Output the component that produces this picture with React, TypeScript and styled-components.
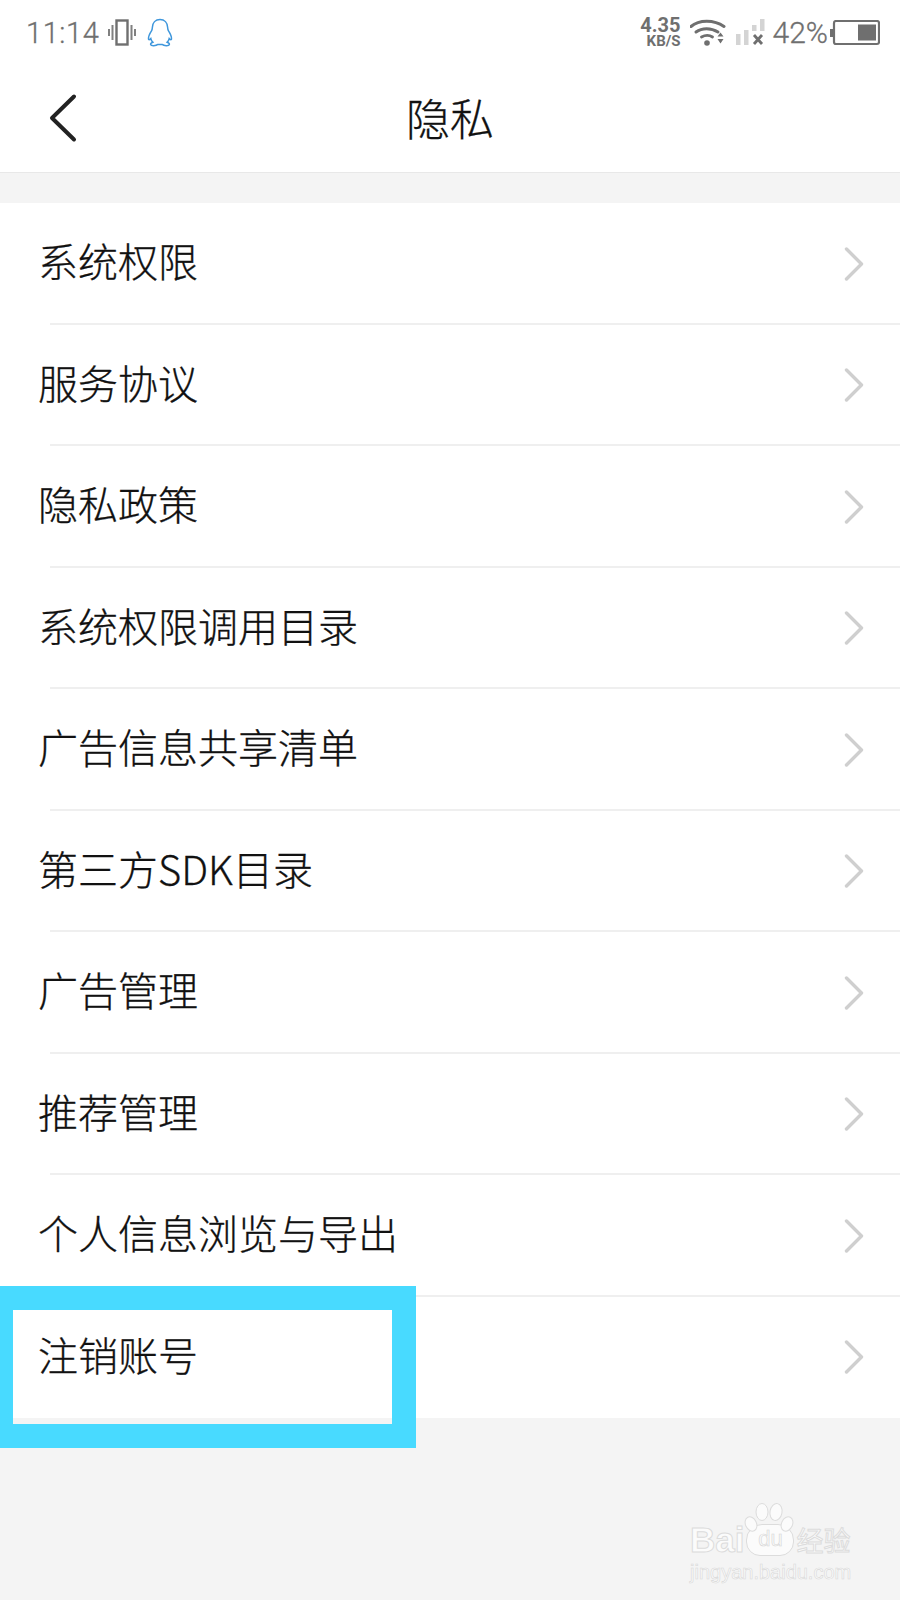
import React from 'react';
import styled, { createGlobalStyle } from 'styled-components';

const GlobalStyle = createGlobalStyle`
  html, body {
    margin: 0;
    padding: 0;
    background: #f4f4f4;
  }
  body {
    font-family: 'Noto Sans CJK SC', Roboto, sans-serif;
  }
`;

const Page = styled.div`
  position: relative;
  width: 900px;
  height: 1600px;
  overflow: hidden;
  background: #f4f4f4;
`;

const StatusBar = styled.div`
  height: 68px;
  box-sizing: border-box;
  padding: 0 20px 3px 26px;
  display: flex;
  align-items: center;
  justify-content: space-between;
  background: #fff;
  color: #6f6f6f;
  font-family: Roboto, sans-serif;
`;

const StatusGroup = styled.div`
  display: flex;
  align-items: center;
`;

const Clock = styled.span`
  font-size: 29px;
  font-weight: 300;
  letter-spacing: 0.6px;
  margin-right: 9px;
  -webkit-text-stroke: 0.3px #6f6f6f;
`;

const Speed = styled.div`
  display: flex;
  flex-direction: column;
  align-items: flex-end;
  font-weight: 700;
  margin-right: 9px;
  span:first-child {
    font-size: 20px;
    line-height: 18px;
  }
  span:last-child {
    font-size: 15px;
    line-height: 15px;
  }
`;

const Percent = styled.span`
  font-size: 30px;
  font-weight: 300;
  margin: 0 2px 0 7px;
  -webkit-text-stroke: 0.3px #6f6f6f;
`;

const Header = styled.header`
  height: 104px;
  display: flex;
  align-items: center;
  justify-content: center;
  position: relative;
  background: #fff;
  border-bottom: 1px solid #e8e8e8;
`;

const BackButton = styled.svg`
  position: absolute;
  left: 48px;
  top: 25px;
`;

const Title = styled.h1`
  margin: 0 0 6px;
  font-size: 44px;
  font-weight: 300;
  color: #111;
  -webkit-text-stroke: 0.3px #111;
`;

const List = styled.ul`
  margin: 30px 0 0;
  padding: 0;
  list-style: none;
  background: #fff;
`;

const Row = styled.li`
  height: 121.5px;
  box-sizing: border-box;
  padding: 0 36px 0 38px;
  display: flex;
  align-items: center;
  justify-content: space-between;
  position: relative;
  font-size: 40px;
  font-weight: 300;
  color: #111;
  &:not(:last-child)::after {
    content: '';
    position: absolute;
    left: 50px;
    right: 0;
    bottom: 0;
    height: 2px;
    background: #efefef;
  }
`;

const RowLabel = styled.span`
  margin-bottom: 7px;
  -webkit-text-stroke: 0.3px #111;
`;

const Highlight = styled.div`
  position: absolute;
  left: -11px;
  top: 1286px;
  width: 379px;
  height: 114px;
  border: 24px solid #48daff;
`;

const Watermark = styled.div`
  position: absolute;
  left: 690px;
  top: 1524px;
  width: 165px;
  color: #fbfbfb;
  font-family: 'Liberation Sans', sans-serif;
`;

const WatermarkBrand = styled.div`
  display: flex;
  align-items: center;
  height: 32px;
  font-size: 35px;
  font-weight: 700;
  line-height: 32px;
  -webkit-text-stroke: 1px #dcdcdc;
`;

const WatermarkDu = styled.span`
  width: 46px;
  height: 30px;
  margin-left: 2px;
  border: 1px solid #dcdcdc;
  border-radius: 16px 16px 14px 14px;
  background: #fbfbfb;
  text-align: center;
  font-size: 22px;
  line-height: 27px;
  font-weight: 400;
  -webkit-text-stroke: 0.6px #d4d4d4;
`;

const WatermarkCjk = styled.span`
  font-size: 27px;
  font-weight: 400;
  line-height: 30px;
  margin-left: 2px;
  font-family: 'Noto Sans CJK SC', sans-serif;
`;

const WatermarkUrl = styled.div`
  font-size: 20px;
  line-height: 24px;
  margin-top: 4px;
  white-space: nowrap;
  -webkit-text-stroke: 0.6px #d8d8d8;
`;

const Paw = styled.svg`
  position: absolute;
  left: 54px;
  top: -22px;
`;

const VibrateIcon = () => (
  <svg width="28" height="28" viewBox="0 0 28 28" fill="none" stroke="#6f6f6f" style={{ marginRight: 11 }}>
    <rect x="8.5" y="1.5" width="11" height="24" strokeWidth="2.4" />
    <path d="M4.5 6v15M1 10v7M23.5 6v15M27 10v7" strokeWidth="2" stroke="#808080" />
  </svg>
);

const PenguinIcon = () => (
  <svg width="26" height="30" viewBox="0 0 26 30" fill="none" stroke="#3f97dc" strokeWidth="1.5">
    <path d="M13 1.5c-4.6 0-7.4 3.3-7.6 7.7-.1 1.5-.2 2.600-.9 3.700-1.500 2.300-3.200 5.300-3 8 .1 1.200 1 1.100 2.300-.3.300 1.500 1 2.800 2 3.600-1.600.7-2.500 1.600-2.100 2.600.5 1.300 5.200 1.300 7.300-.4h4c2.100 1.700 6.800 1.700 7.300.4.400-1-.5-1.900-2.100-2.600 1-.8 1.700-2.100 2-3.600 1.300 1.400 2.200 1.500 2.300.3.200-2.700-1.500-5.700-3-8-.7-1.100-.8-2.200-.9-3.700-.2-4.400-3-7.700-7.600-7.700z" />
  </svg>
);

const WifiIcon = () => (
  <svg width="36" height="28" viewBox="0 0 36 28" fill="#6f6f6f" style={{ marginRight: 10 }}>
    <path d="M1 7.500C9 .5 24 .5 34 7.500" fill="none" stroke="#6f6f6f" strokeWidth="3" strokeLinecap="round" />
    <path d="M6 13c6-4.500 15-4.500 22 0" fill="none" stroke="#6f6f6f" strokeWidth="3" strokeLinecap="round" />
    <path d="M11.500 18c3.500-2 8-2 11 0" fill="none" stroke="#6f6f6f" strokeWidth="2.800" strokeLinecap="round" />
    <circle cx="17" cy="24" r="2.800" />
    <path d="M27.500 17.500l3-4 3 4zM27.500 20l3 4.500 3-4.500z" />
  </svg>
);

const SignalIcon = () => (
  <svg width="30" height="28" viewBox="0 0 30 28">
    <rect x="0" y="15" width="4.500" height="11" fill="#d4d4d4" />
    <rect x="8" y="11" width="4.500" height="15" fill="#d4d4d4" />
    <rect x="16" y="6" width="4.500" height="6" fill="#d4d4d4" />
    <rect x="24" y="0" width="4.500" height="12" fill="#d4d4d4" />
    <path d="M18 16l8 9M26 16l-8 9" stroke="#6f6f6f" strokeWidth="2.800" />
  </svg>
);

const BatteryIcon = () => (
  <svg width="50" height="26" viewBox="0 0 50 26" fill="none">
    <rect x="0" y="9" width="3" height="8" fill="#6f6f6f" />
    <rect x="4" y="1" width="45" height="23" rx="2" stroke="#6f6f6f" strokeWidth="2.200" />
    <rect x="28" y="4.500" width="18" height="16" fill="#6f6f6f" />
  </svg>
);

const Chevron = () => (
  <svg width="20" height="34" viewBox="0 0 20 34" fill="none">
    <path d="M2.500 2l15 15-15 15" stroke="#cfcfcf" strokeWidth="3.400" strokeLinecap="round" strokeLinejoin="round" />
  </svg>
);

const items = [
  '系统权限',
  '服务协议',
  '隐私政策',
  '系统权限调用目录',
  '广告信息共享清单',
  '第三方SDK目录',
  '广告管理',
  '推荐管理',
  '个人信息浏览与导出',
  '注销账号',
];

const App: React.FC = () => {
  return (
    <Page>
      <GlobalStyle />
      <StatusBar>
        <StatusGroup>
          <Clock>11:14</Clock>
          <VibrateIcon />
          <PenguinIcon />
        </StatusGroup>
        <StatusGroup>
          <Speed>
            <span>4.35</span>
            <span>KB/S</span>
          </Speed>
          <WifiIcon />
          <SignalIcon />
          <Percent>42%</Percent>
          <BatteryIcon />
        </StatusGroup>
      </StatusBar>
      <Header>
        <BackButton width="30" height="50" viewBox="0 0 30 50" fill="none">
          <path d="M26 3.500L4 25l22 21.500" stroke="#222" strokeWidth="4" strokeLinecap="round" strokeLinejoin="round" />
        </BackButton>
        <Title>隐私</Title>
      </Header>
      <List>
        {items.map((item) => (
          <Row key={item}>
            <RowLabel>{item}</RowLabel>
            <Chevron />
          </Row>
        ))}
      </List>
      <Highlight />
      <Watermark>
        <Paw width="50" height="34" viewBox="0 0 50 34" fill="#fbfbfb" stroke="#dcdcdc" strokeWidth="1">
          <ellipse cx="7" cy="22" rx="5.500" ry="7.500" transform="rotate(-25 7 22)" />
          <ellipse cx="18" cy="10" rx="6" ry="8.500" />
          <ellipse cx="32" cy="10" rx="6" ry="8.500" transform="rotate(10 32 10)" />
          <ellipse cx="43" cy="22" rx="5.500" ry="7.500" transform="rotate(25 43 22)" />
        </Paw>
        <WatermarkBrand>
          Bai
          <WatermarkDu>du</WatermarkDu>
          <WatermarkCjk>经验</WatermarkCjk>
        </WatermarkBrand>
        <WatermarkUrl>jingyan.baidu.com</WatermarkUrl>
      </Watermark>
    </Page>
  );
};

export default App;
